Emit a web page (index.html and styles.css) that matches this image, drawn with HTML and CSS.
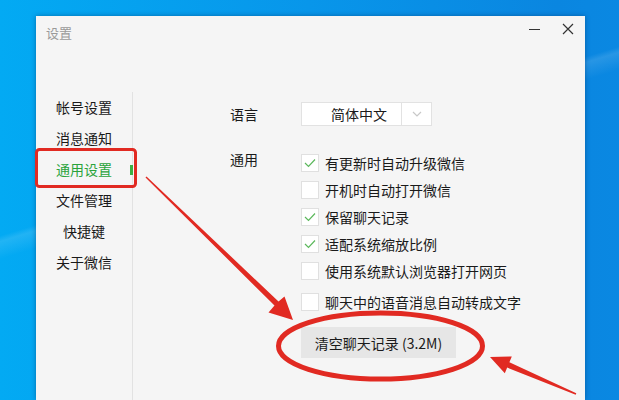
FILE: index.html
```html
<!DOCTYPE html>
<html lang="zh-CN">
<head>
<meta charset="utf-8">
<title>设置</title>
<link rel="stylesheet" href="styles.css">
</head>
<body>
<div class="desktop">
  <div class="window">
    <div class="titlebar">
      <span class="title">设置</span>
      <div class="controls">
        <span class="ctl min"></span>
        <svg class="ctl close" width="12" height="12" viewBox="0 0 12 12"><path d="M1 1L11 11M11 1L1 11" stroke="#333" stroke-width="1.2" fill="none"/></svg>
      </div>
    </div>
    <div class="main">
      <nav class="sidebar">
        <div class="nav-item">帐号设置</div>
        <div class="nav-item">消息通知</div>
        <div class="nav-item active">通用设置<span class="indicator"></span></div>
        <div class="nav-item">文件管理</div>
        <div class="nav-item">快捷键</div>
        <div class="nav-item">关于微信</div>
      </nav>
      <section class="content">
        <div class="row lang-row">
          <div class="label">语言</div>
          <div class="select">
            <span class="select-text">简体中文</span>
            <span class="select-arrow"><svg width="10" height="6" viewBox="0 0 10 6"><path d="M1 1L5 5L9 1" stroke="#c8c8c8" stroke-width="1.2" fill="none"/></svg></span>
          </div>
        </div>
        <div class="row general-row">
          <div class="label general-label">通用</div>
          <div class="options">
            <label class="opt"><span class="box checked"><svg width="12" height="10" viewBox="0 0 12 10"><path d="M1 5L4.5 8.5L11 1.5" stroke="#5cb85c" stroke-width="1.2" fill="none"/></svg></span>有更新时自动升级微信</label>
            <label class="opt"><span class="box"></span>开机时自动打开微信</label>
            <label class="opt"><span class="box checked"><svg width="12" height="10" viewBox="0 0 12 10"><path d="M1 5L4.5 8.5L11 1.5" stroke="#5cb85c" stroke-width="1.2" fill="none"/></svg></span>保留聊天记录</label>
            <label class="opt"><span class="box checked"><svg width="12" height="10" viewBox="0 0 12 10"><path d="M1 5L4.5 8.5L11 1.5" stroke="#5cb85c" stroke-width="1.2" fill="none"/></svg></span>适配系统缩放比例</label>
            <label class="opt"><span class="box"></span>使用系统默认浏览器打开网页</label>
            <label class="opt last"><span class="box"></span>聊天中的语音消息自动转成文字</label>
            <button class="clear-btn">清空聊天记录 (3.2M)</button>
          </div>
        </div>
      </section>
    </div>
  </div>
  <svg class="annot" width="619" height="400" viewBox="0 0 619 400">
    <rect x="36.5" y="149.5" width="99" height="37" rx="3" fill="none" stroke="#e12a22" stroke-width="3"/>
    <ellipse cx="380.5" cy="346" rx="102" ry="33" fill="none" stroke="#e12a22" stroke-width="5"/>
    <polygon fill="#e12a22" points="145.5,177.6 274.5,305.5 268.5,312.5 293,320 284.5,296.5 278.5,301.5 146.5,176.4"/>
    <polygon fill="#e12a22" points="576.3,393.3 509.4,362.2 511.8,356.5 490,357 504.8,373.2 507.2,367.6 575.7,394.7"/>
  </svg>
</div>
</body>
</html>
```
FILE: styles.css
```css
* { box-sizing: border-box; }
html, body { margin: 0; padding: 0; }
body {
  width: 619px;
  height: 400px;
  overflow: hidden;
  font-family: "Noto Sans CJK SC", "Noto Sans", sans-serif;
}
.desktop {
  position: relative;
  width: 619px;
  height: 400px;
  padding: 16px 0 0 36px;
  background:
    linear-gradient(163deg, transparent 0 40%, rgba(255,255,255,0.12) 41%, transparent 44%),
    linear-gradient(90deg, #03aaf3 0%, #0896ea 50%, #0a86e0 90%, #0a88e2 100%);
}
.window {
  width: 549px;
  height: 384px;
  background: #f5f5f5;
  box-shadow: 0 0 5px rgba(0, 40, 90, 0.45);
  display: flex;
  flex-direction: column;
}
.titlebar {
  height: 32px;
  display: flex;
  align-items: center;
  justify-content: space-between;
  padding: 0 11px 0 10px;
}
.title {
  font-size: 13px;
  color: #9a9a9a;
}
.controls {
  display: flex;
  align-items: center;
  gap: 22px;
  margin-top: -6px;
}
.ctl.min {
  display: block;
  width: 11px;
  height: 1px;
  background: #333;
}
.main {
  flex: 1;
  display: flex;
  margin-top: 44px;
}
.sidebar {
  width: 97px;
  border-right: 1px solid #e2e2e2;
  display: flex;
  flex-direction: column;
}
.nav-item {
  position: relative;
  height: 31px;
  line-height: 30px;
  font-size: 14px;
  color: #1a1a1a;
  text-align: center;
}
.nav-item.active { color: #2aa33b; }
.indicator {
  position: absolute;
  right: -1px;
  top: 11px;
  width: 3px;
  height: 10px;
  background: #3cb043;
}
.content {
  flex: 1;
  padding: 10px 0 0 97px;
}
.row { display: flex; }
.label {
  width: 71px;
  font-size: 14px;
  color: #1a1a1a;
}
.lang-row { align-items: center; height: 24px; }
.select {
  width: 131px;
  height: 24px;
  background: #fff;
  border: 1px solid #e2e2e2;
  display: flex;
}
.select-text {
  width: 100px;
  border-right: 1px solid #e2e2e2;
  font-size: 14px;
  line-height: 22px;
  color: #1a1a1a;
  padding-left: 29px;
}
.select-arrow {
  flex: 1;
  display: flex;
  align-items: center;
  justify-content: center;
}
.general-row { margin-top: 23px; }
.general-label {
  line-height: 20px;
  padding-top: 0;
}
.options {
  display: flex;
  flex-direction: column;
  align-items: flex-start;
}
.opt {
  height: 27px;
  display: flex;
  align-items: center;
  font-size: 14px;
  color: #1a1a1a;
}
.opt.last { margin-top: 4px; }
.box {
  width: 18px;
  height: 18px;
  background: #fff;
  border: 1px solid #e0e0e0;
  margin-right: 6px;
  display: flex;
  align-items: center;
  justify-content: center;
}
.clear-btn {
  margin-top: 12px;
  width: 155px;
  height: 31px;
  border: none;
  background: #e6e6e6;
  font-family: inherit;
  font-size: 14px;
  color: #1a1a1a;
  padding: 0;
}
.annot {
  position: absolute;
  left: 0;
  top: 0;
  pointer-events: none;
}
```
